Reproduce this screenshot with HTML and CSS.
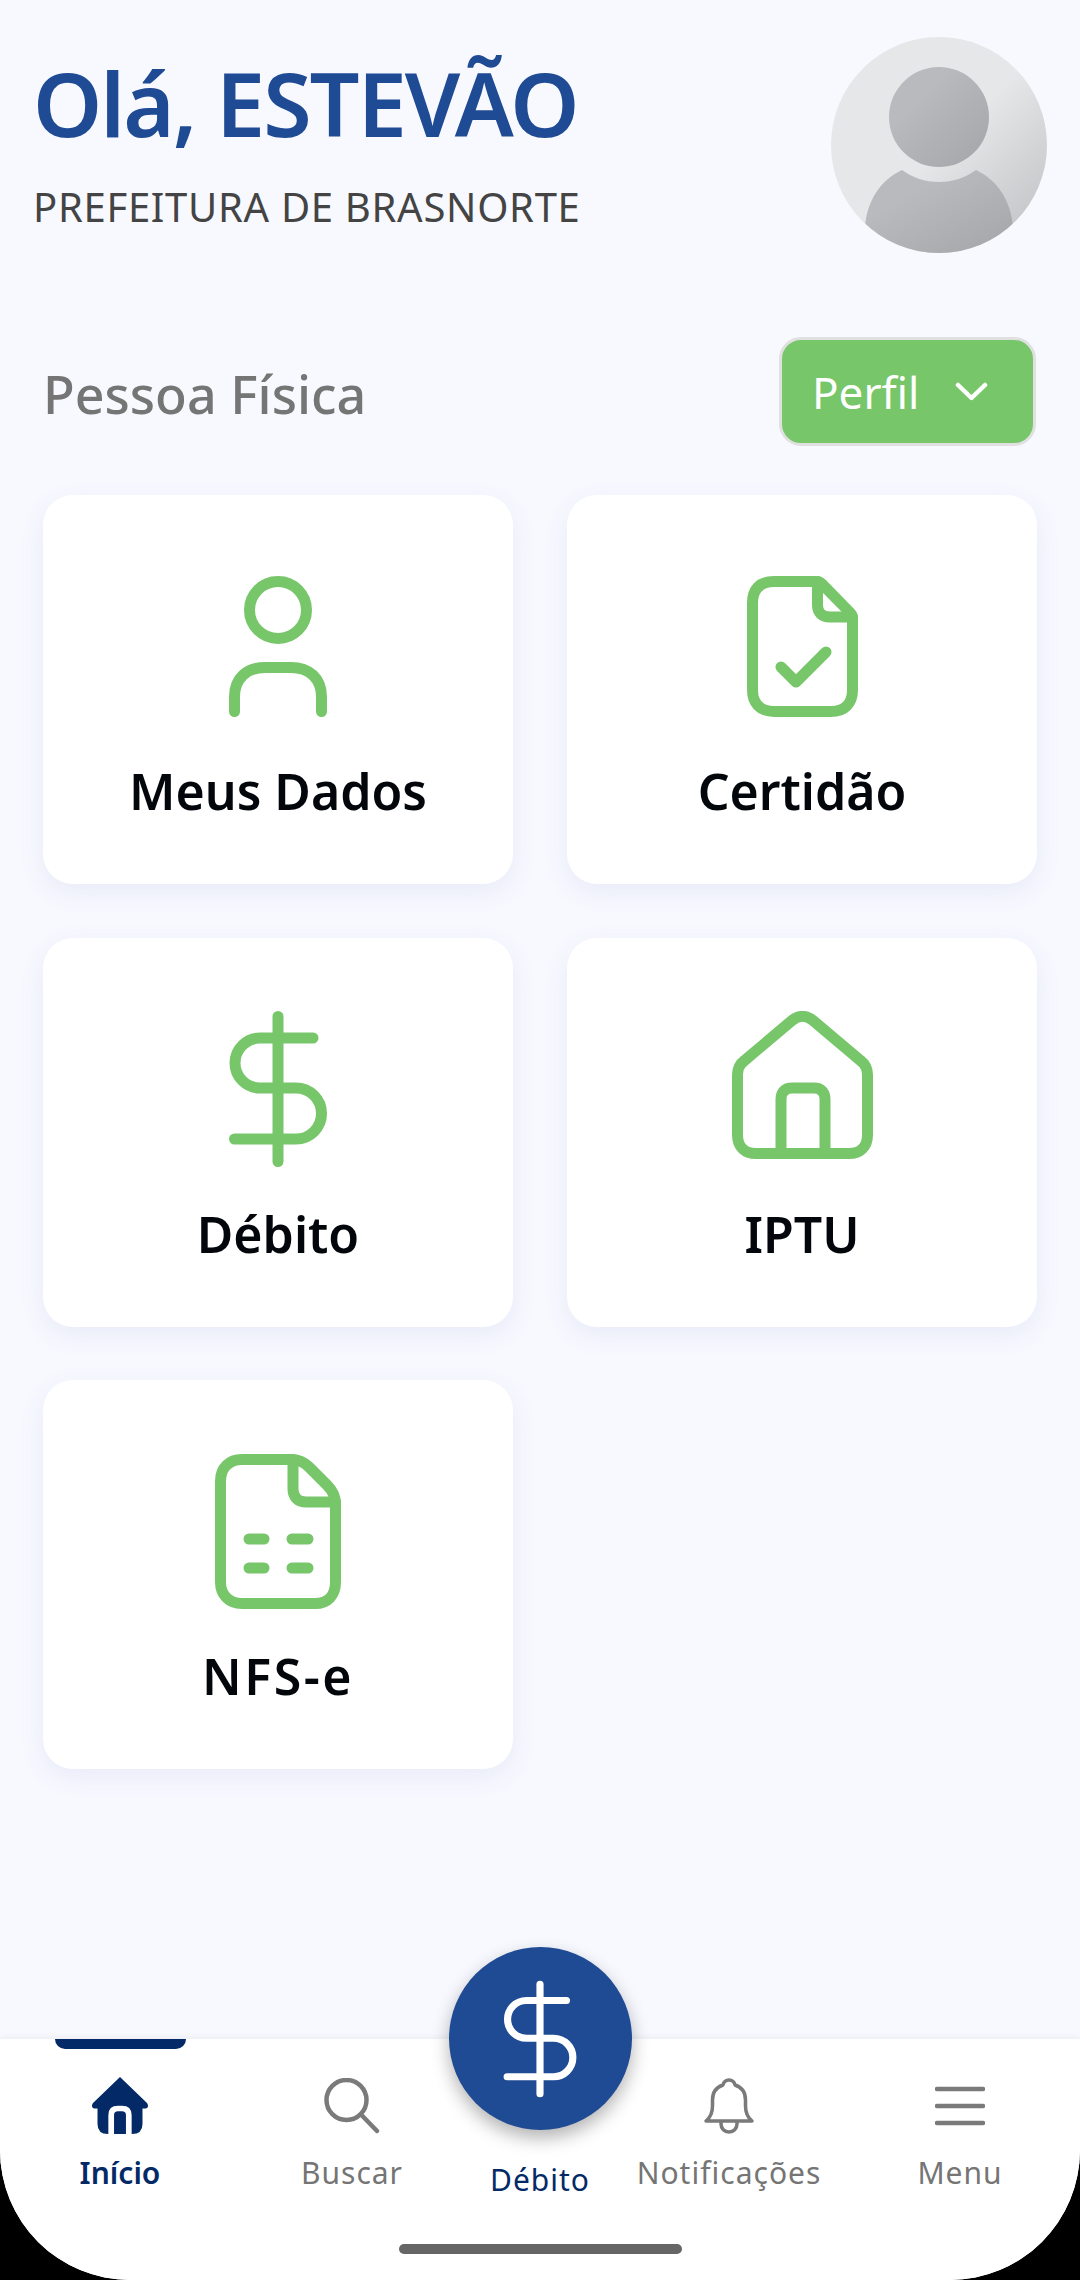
FILE: index.html
```html
<!DOCTYPE html>
<html lang="pt-BR">
<head>
    <meta charset="UTF-8">
    <meta name="viewport" content="width=device-width, initial-scale=1.0">
    <title>Início</title>
    <link rel="stylesheet" href="styles.css">
</head>
<body>
    <div class="screen">
        <main class="content">
            <header class="header">
                <div class="greeting">
                    <h1>Olá, ESTEVÃO</h1>
                    <p>PREFEITURA DE BRASNORTE</p>
                </div>
                <svg class="avatar" viewBox="0 0 216 216">
                    <defs>
                        <linearGradient id="avatarBg" x1="0.3" y1="0.3" x2="1" y2="1">
                            <stop offset="0.3" stop-color="#e6e7e8"/>
                            <stop offset="1" stop-color="#bcbdc0"/>
                        </linearGradient>
                        <linearGradient id="avatarFg" x1="0" y1="0" x2="1" y2="1">
                            <stop offset="0.3" stop-color="#b9babd"/>
                            <stop offset="1" stop-color="#a4a5a8"/>
                        </linearGradient>
                        <clipPath id="avatarClip"><circle cx="108" cy="108" r="108"/></clipPath>
                    </defs>
                    <circle cx="108" cy="108" r="108" fill="url(#avatarBg)"/>
                    <circle cx="108" cy="80" r="50" fill="url(#avatarFg)"/>
                    <path clip-path="url(#avatarClip)" fill="url(#avatarFg)" d="M34 190C36 165 48 144 71 133C82 141 94 145 108 145C122 145 134 141 145 133C168 144 180 165 182 190L182 216H34Z"/>
                </svg>
            </header>

            <div class="section-head">
                <h2>Pessoa Física</h2>
                <button class="profile-btn">
                    <span>Perfil</span>
                    <svg width="33" height="20" viewBox="0 0 33 20"><path d="M3 3L16.5 16L30 3" fill="none" stroke="#fff" stroke-width="4.5" stroke-linecap="round" stroke-linejoin="round"/></svg>
                </button>
            </div>

            <div class="cards">
                <a class="card">
                    <span class="card-icon">
                        <svg width="98" height="141" viewBox="0 0 98 141">
                            <circle cx="49" cy="34" r="28.5"/>
                            <path d="M5.5 135.5V121C5.5 102 18 91.5 36 91.5H62C80 91.5 92.5 102 92.5 121V135.5"/>
                        </svg>
                    </span>
                    <span class="card-label">Meus Dados</span>
                </a>
                <a class="card">
                    <span class="card-icon">
                        <svg width="111" height="141" viewBox="0 0 111 141">
                            <path d="M70.5 5.5V29C70.5 36.5 75 41 82.5 41H105.5"/>
                            <path d="M27 5.5H70C72 5.5 73.5 6.5 75 8L103 36.5C104.5 38 105.5 40 105.5 42V114C105.5 127 98 135.5 84 135.5H27C13 135.5 5.5 127 5.5 114V27C5.5 13 13 5.5 27 5.5Z"/>
                            <path d="M34 91L49 106L79 76"/>
                        </svg>
                    </span>
                    <span class="card-label">Certidão</span>
                </a>
                <a class="card">
                    <span class="card-icon">
                        <svg width="98" height="156" viewBox="0 0 98 156">
                            <path d="M49 5.5V150.5"/>
                            <path d="M84 27H31A25 25 0 0 0 31 77H67A25.5 25.5 0 0 1 67 128H5.5"/>
                        </svg>
                    </span>
                    <span class="card-label">Débito</span>
                </a>
                <a class="card">
                    <span class="card-icon">
                        <svg width="141" height="156" viewBox="0 0 141 156">
                            <path d="M5.5 124V64C5.5 57 8 53 12 50L60 9.5C66.5 4 74.5 4 81 9.5L129 50C133 53 135.5 57 135.5 64V124C135.5 136 128 142.5 117 142.5H24C13 142.5 5.5 136 5.5 124Z"/>
                            <path d="M49 142V88C49 81 53 77 60 77H82C89 77 93 81 93 88V142"/>
                        </svg>
                    </span>
                    <span class="card-label">IPTU</span>
                </a>
                <a class="card">
                    <span class="card-icon">
                        <svg width="126" height="155" viewBox="0 0 126 155">
                            <path d="M78 5.5V35C78 43 83 48 91 48H120.5"/>
                            <path d="M27 5.5H76C83 5.5 89 8 94 13L112 31C118 37 120.5 43 120.5 50V128C120.5 141 113 149.5 100 149.5H27C14 149.5 5.5 141 5.5 128V27C5.5 14 14 5.5 27 5.5Z"/>
                            <path d="M34 85H49M77 85H93M34 114H49M77 114H93"/>
                        </svg>
                    </span>
                    <span class="card-label card-label-wide">NFS-e</span>
                </a>
            </div>
        </main>

        <nav class="tabbar">
            <a class="tab active">
                <span class="indicator"></span>
                <span class="tab-icon">
                    <svg width="58" height="58" viewBox="0 0 58 58">
                        <path fill="#032a66" d="M29 0L56 26Q58.5 30 55 31.5H51.5V47Q51.5 57 41 57H17Q6.5 57 6.5 47V31.5H3Q-0.5 30 2 26Z"/>
                        <path fill="none" stroke="#fff" stroke-width="5.7" d="M20.2 57V38Q20.2 31.5 27 31.5H31Q37.8 31.5 37.8 38V57"/>
                    </svg>
                </span>
                <span class="tab-label">Início</span>
            </a>
            <a class="tab">
                <span class="tab-icon">
                    <svg width="56" height="56" viewBox="0 0 56 56" fill="none" stroke="#7a7a7a" stroke-width="4.5" stroke-linecap="round"><circle cx="22.5" cy="22" r="20"/><path d="M37 36.5L53 53"/></svg>
                </span>
                <span class="tab-label">Buscar</span>
            </a>
            <a class="tab tab-main">
                <span class="fab">
                    <svg width="74" height="118" viewBox="0 0 98 156" fill="none" stroke="#fff" stroke-width="9.5" stroke-linecap="round"><path d="M49 5.5V150.5"/><path d="M84 27H31A25 25 0 0 0 31 77H67A25.5 25.5 0 0 1 67 128H5.5"/></svg>
                </span>
                <span class="tab-label">Débito</span>
            </a>
            <a class="tab">
                <span class="tab-icon">
                    <svg width="50" height="56" viewBox="0 0 50 56" fill="none" stroke="#7a7a7a" stroke-width="3.5" stroke-linejoin="round"><path d="M2 43C7 39 8.5 34 8.5 28V22C8.5 14 13 9 19 7C19.5 4 22 2 25 2C28 2 30.5 4 31 7C37 9 41.5 14 41.5 22V28C41.5 34 43 39 48 43Z"/><path d="M17 43V46C17 50.5 20.5 54 25 54C29.5 54 33 50.5 33 46V43"/></svg>
                </span>
                <span class="tab-label">Notificações</span>
            </a>
            <a class="tab">
                <span class="tab-icon">
                    <svg width="50" height="56" viewBox="0 0 50 56" stroke="#7a7a7a" stroke-width="4.5" stroke-linecap="round"><path d="M2 11H48M2 28H48M2 45H48"/></svg>
                </span>
                <span class="tab-label">Menu</span>
            </a>
            <span class="home-bar"></span>
        </nav>
    </div>
</body>
</html>
```

FILE: styles.css
```css
* {
    box-sizing: border-box;
}
body {
    margin: 0;
    background-color: #000;
    font-family: "Noto Sans", Arial, sans-serif;
}
h1, h2, p {
    margin: 0;
}
.screen {
    width: 1080px;
    height: 2280px;
    display: flex;
    flex-direction: column;
    background-color: #f8f9ff;
    border-radius: 0 0 130px 130px;
    overflow: hidden;
}
.content {
    flex: 1;
    padding: 37px 43px 0;
}
.header {
    display: flex;
    justify-content: space-between;
    margin: 0 -10px 0 -10px;
}
.greeting {
    padding-top: 16px;
}
.greeting h1 {
    font-size: 88px;
    line-height: 100px;
    font-weight: 600;
    letter-spacing: -2px;
    color: #1f4a94;
}
.greeting p {
    margin-top: 29px;
    font-size: 40px;
    line-height: 50px;
    letter-spacing: 0.7px;
    color: #444;
}
.avatar {
    width: 216px;
    height: 216px;
}
.section-head {
    display: flex;
    justify-content: space-between;
    align-items: center;
    margin: 84px 1px 0 0;
}
.section-head h2 {
    padding-top: 4px;
    font-size: 52px;
    font-weight: 500;
    color: #757575;
}
.profile-btn {
    display: flex;
    align-items: center;
    gap: 36px;
    width: 257px;
    height: 109px;
    padding: 0 0 0 30px;
    background-color: #77c66a;
    border: 3px solid #e0e0e0;
    border-radius: 22px;
    color: #fff;
    font-family: inherit;
    font-size: 44px;
}
.cards {
    display: grid;
    grid-template-columns: repeat(2, 470px);
    grid-auto-rows: 389px;
    gap: 53.5px 54px;
    margin-top: 49px;
}
.card {
    display: flex;
    flex-direction: column;
    align-items: center;
    padding-top: 73px;
    background: #fff;
    border-radius: 30px;
    box-shadow: 0 8px 26px rgba(70,90,170,0.09);
}
.card-icon {
    display: flex;
    align-items: center;
    justify-content: center;
    height: 156px;
}
.card-icon svg {
    fill: none;
    stroke: #77c66a;
    stroke-width: 11;
    stroke-linecap: round;
    stroke-linejoin: round;
}
.card-label {
    margin-top: 32px;
    font-size: 50px;
    line-height: 70px;
    font-weight: 600;
    color: #03070c;
}
.card-label-wide {
    letter-spacing: 2.5px;
}
.tabbar {
    position: relative;
    display: grid;
    grid-template-columns: 240px 224px 152px 226px 236px;
    height: 241px;
    padding-top: 37px;
    background: #fff;
    box-shadow: 0 -2px 6px rgba(0,0,0,0.05);
}
.tab {
    position: relative;
    display: flex;
    flex-direction: column;
    align-items: center;
    color: #757575;
}
.tab-icon {
    display: flex;
    align-items: center;
    justify-content: center;
    height: 60px;
}
.tab-label {
    margin-top: 16px;
    font-size: 30px;
    line-height: 42px;
    letter-spacing: 1px;
}
.active {
    color: #032a66;
}
.active .tab-label {
    font-weight: 600;
    letter-spacing: 0;
}
.indicator {
    position: absolute;
    top: -37px;
    left: 55px;
    width: 131px;
    height: 10px;
    background-color: #032a66;
    border-radius: 0 0 10px 10px;
}
.tab-main {
    margin-top: -129px;
    color: #032a66;
}
.fab {
    display: flex;
    align-items: center;
    justify-content: center;
    flex-shrink: 0;
    width: 183px;
    height: 183px;
    background-color: #1f4a94;
    border-radius: 50%;
    box-shadow: 0 8px 18px rgba(0,0,0,0.3);
}
.tab-main .tab-label {
    margin-top: 29px;
}
.home-bar {
    position: absolute;
    left: 399px;
    top: 205px;
    width: 283px;
    height: 10px;
    background-color: #666;
    border-radius: 5px;
}
```
